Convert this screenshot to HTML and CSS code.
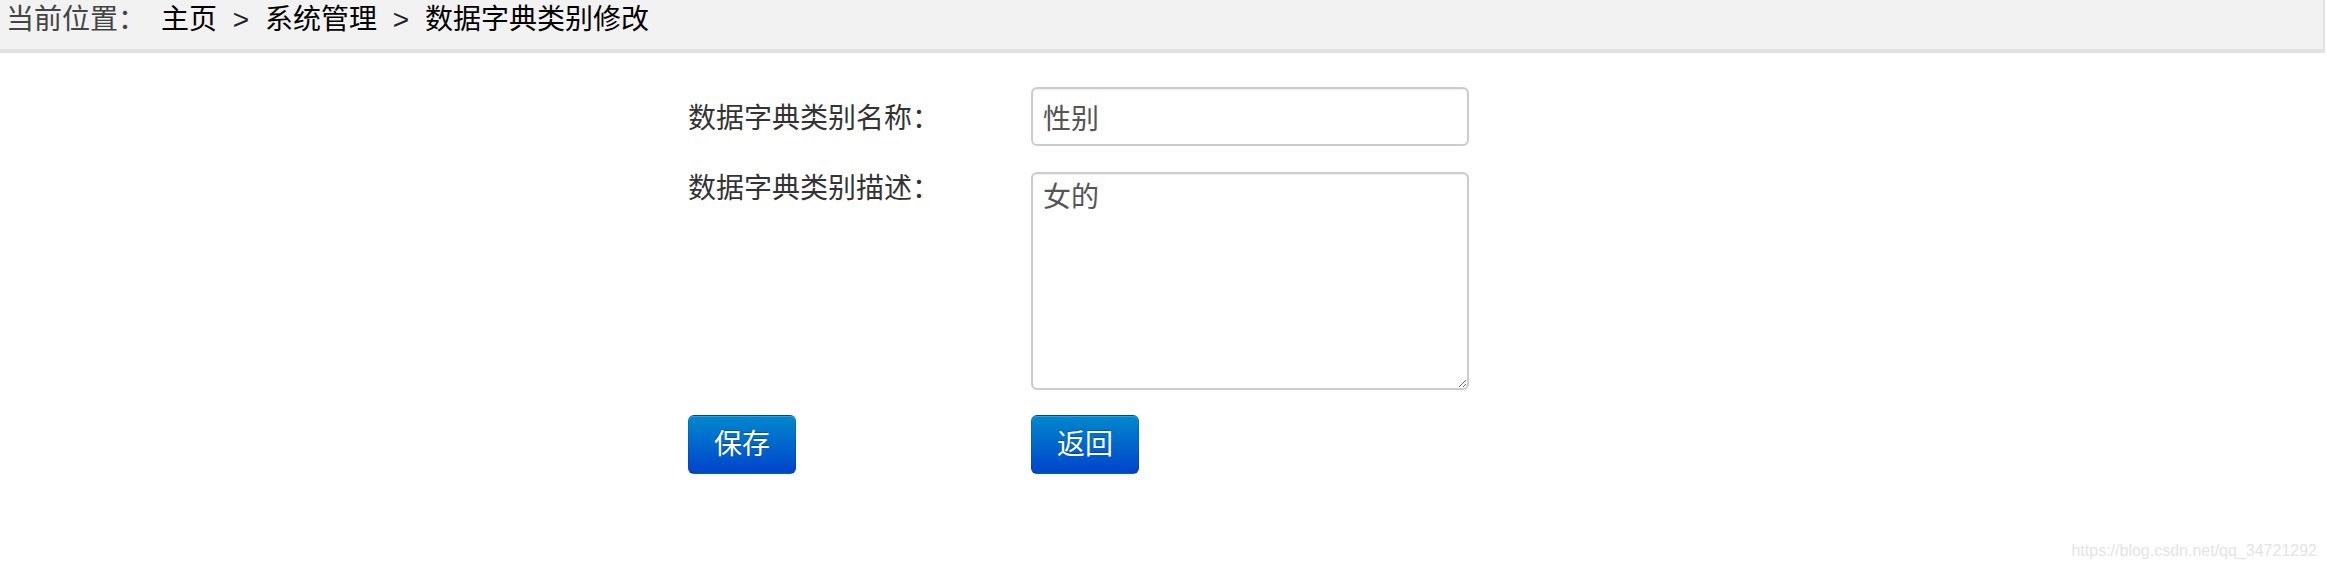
FILE: index.html
```html
<!DOCTYPE html>
<html lang="zh-CN">
<head>
<meta charset="utf-8">
<title>数据字典类别修改</title>
<link rel="stylesheet" href="styles.css">
</head>
<body>
<div class="crumb">
  <span class="crumb-label">当前位置：</span>
  <span class="crumb-item">主页</span>
  <span class="sep">&gt;</span>
  <span class="crumb-item">系统管理</span>
  <span class="sep">&gt;</span>
  <span class="crumb-item">数据字典类别修改</span>
</div>
<form class="form">
  <label class="label label-first" for="name">数据字典类别名称：</label>
  <input class="field" id="name" type="text" value="性别">
  <label class="label label-second" for="desc">数据字典类别描述：</label>
  <textarea class="area" id="desc">女的</textarea>
  <div class="cell"><button type="button" class="btn">保存</button></div>
  <div class="cell"><button type="button" class="btn">返回</button></div>
</form>
<div class="watermark">https://blog.csdn.net/qq_34721292</div>
</body>
</html>
```

FILE: styles.css
```css
html, body {
  margin: 0;
  padding: 0;
  background: #ffffff;
}

body {
  font-family: "Liberation Sans", "Noto Sans CJK SC", sans-serif;
  width: 2327px;
  height: 570px;
  overflow: hidden;
}

.crumb {
  display: flex;
  height: 44px;
  padding: 5px 0 0 6px;
  margin-right: 2px;
  background: #f2f2f2;
  border-bottom: 4px solid #e2e2e2;
  border-right: 2px solid #e2e2e2;
  font-size: 28px;
  line-height: 30px;
  color: #000000;
}

.crumb-label {
  color: #444444;
  margin-right: 15px;
}

.sep {
  width: 48px;
  text-align: center;
  color: #222222;
}

.form {
  display: grid;
  grid-template-columns: 343px 438px;
  row-gap: 25px;
  margin: 34px 0 0 688px;
  font-family: "Liberation Sans", "Noto Sans CJK SC", sans-serif;
}

.label {
  font-size: 28px;
  line-height: 30px;
  color: #333333;
}

.label-first {
  padding-top: 17px;
}

.label-second {
  padding-top: 2px;
}

.field,
.area {
  box-sizing: border-box;
  width: 438px;
  margin: 0;
  border: 2px solid #cccccc;
  border-radius: 6px;
  box-shadow: inset 0 1px 2px rgba(0, 0, 0, 0.075);
  background: #ffffff;
  font-family: "Liberation Sans", "Noto Sans CJK SC", sans-serif;
  font-size: 28px;
  line-height: 30px;
  color: #555555;
  outline: none;
}

.field {
  height: 59px;
  padding: 0 10px;
  margin-bottom: 1px;
}

.area {
  display: block;
  height: 218px;
  padding: 9px 10px;
  resize: both;
}

.cell {
  display: flex;
}

.btn {
  box-sizing: border-box;
  width: 108px;
  height: 59px;
  margin: 0;
  padding: 0;
  border: 1px solid;
  border-color: rgba(0, 0, 0, 0.1) rgba(0, 0, 0, 0.1) rgba(0, 0, 0, 0.25);
  border-radius: 6px;
  background-color: #006dcc;
  background-image: linear-gradient(to bottom, #0088cc, #0044cc);
  box-shadow: inset 0 1px 0 rgba(255, 255, 255, 0.2), 0 1px 2px rgba(0, 0, 0, 0.05);
  color: #ffffff;
  text-shadow: 0 -1px 0 rgba(0, 0, 0, 0.25);
  font-family: "Liberation Sans", "Noto Sans CJK SC", sans-serif;
  font-size: 28px;
  line-height: 30px;
  cursor: pointer;
}

.watermark {
  position: absolute;
  top: 542px;
  right: 10px;
  font-family: "Liberation Sans", Arial, sans-serif;
  font-size: 16px;
  line-height: 18px;
  color: #e4e4e4;
}
```
